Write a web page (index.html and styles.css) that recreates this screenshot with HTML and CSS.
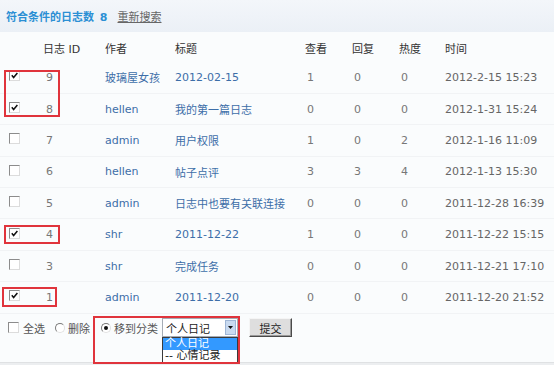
FILE: index.html
```html
<!DOCTYPE html>
<html lang="zh-CN">
<head>
<meta charset="utf-8">
<title>日志列表</title>
<link rel="stylesheet" href="styles.css">
</head>
<body>
<div class="page">
  <div class="topbar">
    <span class="count">符合条件的日志数 <b>8</b></span>
    <a class="research" href="#">重新搜索</a>
  </div>

  <table class="logs">
    <colgroup>
      <col class="c-cb"><col class="c-id"><col class="c-au"><col class="c-ti">
      <col class="c-n"><col class="c-n"><col class="c-h"><col class="c-t">
    </colgroup>
    <thead>
      <tr><th></th><th class="hid">日志 ID</th><th>作者</th><th>标题</th><th class="hn">查看</th><th class="hn">回复</th><th class="hn">热度</th><th class="hn">时间</th></tr>
    </thead>
    <tbody>
      <tr><td><span class="cb on"><svg viewBox="0 0 10 10"><path d="M2 4.8 L4 7.2 L8.2 2.2"/></svg></span></td><td class="id">9</td><td class="lnk">玻璃屋女孩</td><td class="lnk">2012-02-15</td><td class="num">1</td><td class="num">0</td><td class="num">0</td><td class="time">2012-2-15 15:23</td></tr>
      <tr><td><span class="cb on"><svg viewBox="0 0 10 10"><path d="M2 4.8 L4 7.2 L8.2 2.2"/></svg></span></td><td class="id">8</td><td class="lnk">hellen</td><td class="lnk">我的第一篇日志</td><td class="num">0</td><td class="num">0</td><td class="num">0</td><td class="time">2012-1-31 15:24</td></tr>
      <tr><td><span class="cb"></span></td><td class="id">7</td><td class="lnk">admin</td><td class="lnk">用户权限</td><td class="num">1</td><td class="num">0</td><td class="num">2</td><td class="time">2012-1-16 11:09</td></tr>
      <tr><td><span class="cb"></span></td><td class="id">6</td><td class="lnk">hellen</td><td class="lnk">帖子点评</td><td class="num">3</td><td class="num">3</td><td class="num">4</td><td class="time">2012-1-13 15:30</td></tr>
      <tr><td><span class="cb"></span></td><td class="id">5</td><td class="lnk">admin</td><td class="lnk">日志中也要有关联连接</td><td class="num">0</td><td class="num">0</td><td class="num">0</td><td class="time">2011-12-28 16:39</td></tr>
      <tr><td><span class="cb on"><svg viewBox="0 0 10 10"><path d="M2 4.8 L4 7.2 L8.2 2.2"/></svg></span></td><td class="id">4</td><td class="lnk">shr</td><td class="lnk">2011-12-22</td><td class="num">1</td><td class="num">0</td><td class="num">0</td><td class="time">2011-12-22 15:15</td></tr>
      <tr><td><span class="cb"></span></td><td class="id">3</td><td class="lnk">shr</td><td class="lnk">完成任务</td><td class="num">0</td><td class="num">0</td><td class="num">0</td><td class="time">2011-12-21 17:10</td></tr>
      <tr><td><span class="cb on"><svg viewBox="0 0 10 10"><path d="M2 4.8 L4 7.2 L8.2 2.2"/></svg></span></td><td class="id">1</td><td class="lnk">admin</td><td class="lnk">2011-12-20</td><td class="num">0</td><td class="num">0</td><td class="num">0</td><td class="time">2011-12-20 21:52</td></tr>
    </tbody>
  </table>

  <div class="actions">
    <label class="opt"><span class="cb"></span>全选</label>
    <label class="opt del"><span class="radio"></span>删除</label>
    <label class="opt move"><span class="radio on"></span>移到分类</label>
    <div class="select">
      <span class="sel-text">个人日记</span>
      <span class="sel-btn"><svg viewBox="0 0 7 4"><path d="M0 0 H7 L3.5 4 Z"/></svg></span>
      <div class="dropdown">
        <div class="item active">个人日记</div>
        <div class="item">-- 心情记录</div>
      </div>
    </div>
    <button class="submit" type="button">提交</button>
  </div>
  <div class="footline"></div>

  <div class="mark m1"></div>
  <div class="mark m2"></div>
  <div class="mark m3"></div>
  <div class="mark m4"></div>
</div>
</body>
</html>
```

FILE: styles.css
```css
* { box-sizing: border-box; }
html, body { margin: 0; padding: 0; }
body {
  background: #fafcfd;
  font-family: "DejaVu Sans", "Noto Sans CJK SC", sans-serif;
  font-size: 11px;
  color: #555;
}
.page {
  position: relative;
  width: 554px;
  height: 365px;
  overflow: hidden;
}
.topbar {
  height: 32px;
  display: flex;
  align-items: center;
  gap: 10px;
  padding-left: 6px;
  background: linear-gradient(#f3f6fa, #ebf0f6);
}
.count {
  color: #2b8fd4;
  font-weight: bold;
}
.count b { margin-left: 2px; }
.research {
  color: #666;
  text-decoration: underline;
}
.logs {
  width: 554px;
  border-collapse: collapse;
  table-layout: fixed;
}
.c-cb { width: 43px; }
.c-id { width: 62px; }
.c-au { width: 70px; }
.c-ti { width: 130px; }
.c-n { width: 47px; }
.c-h { width: 46px; }
.c-t { width: 109px; }
.logs th {
  height: 30px;
  padding: 2px 0 0;
  text-align: left;
  font-weight: normal;
  color: #333;
}
.logs th.hn { padding-left: 0; }
.logs td {
  height: 31.4px;
  padding: 0;
  white-space: nowrap;
  border-bottom: 1px solid #f1f3f5;
}
.logs td:first-child { padding-left: 9px; }
.logs td.id { padding-left: 3px; color: #777; }
.logs td.lnk { color: #3d6ea8; }
.logs td.num { padding-left: 2px; color: #777; }
.logs td.time { color: #666; }
.cb {
  display: inline-block;
  width: 11px;
  height: 11px;
  background: #fff;
  border: 1px solid;
  border-color: #8c8c8c #dcdcdc #dcdcdc #8c8c8c;
  vertical-align: middle;
  position: relative;
  top: -2px;
}
.cb svg {
  display: block;
  width: 9px;
  height: 9px;
}
.cb svg path {
  fill: none;
  stroke: #111;
  stroke-width: 1.7;
}
.actions {
  height: 28px;
  display: flex;
  align-items: center;
  padding-left: 8px;
}
.opt {
  display: flex;
  align-items: center;
  gap: 3px;
  color: #555;
}
.opt .cb { top: 0; margin-right: 1px; }
.del { margin-left: 10px; }
.move { margin-left: 11px; }
.radio {
  display: inline-block;
  width: 10px;
  height: 10px;
  border-radius: 50%;
  border: 1px solid;
  border-color: #7a7a7a #e2e2e2 #e2e2e2 #7a7a7a;
  background: #fff;
  position: relative;
}
.radio.on::after {
  content: "";
  position: absolute;
  left: 2px;
  top: 2px;
  width: 4px;
  height: 4px;
  border-radius: 50%;
  background: #111;
}
.select {
  position: relative;
  margin-left: 4px;
  width: 76px;
  height: 19px;
  border: 1px solid #a5acb5;
  background: #fff;
  display: flex;
  align-items: center;
  color: #222;
  font-size: 11px;
}
.sel-text { flex: 1; padding-left: 3px; }
.sel-btn {
  width: 11px;
  height: 15px;
  margin-right: 1px;
  background: #c9daf0;
  border: 1px solid #9fb6d6;
  display: flex;
  align-items: center;
  justify-content: center;
}
.sel-btn svg { width: 5px; height: 3px; fill: #111; }
.dropdown {
  position: absolute;
  left: -1px;
  top: 18px;
  width: 76px;
  border: 1px solid #3b3b3b;
  background: #fff;
}
.item {
  height: 12px;
  line-height: 12px;
  padding-left: 2px;
  color: #222;
}
.item.active { background: #3399ff; color: #fff; }
.submit {
  margin-left: 11px;
  width: 43px;
  height: 19px;
  padding: 0;
  font: inherit;
  color: #222;
  background: #dedede;
  border: 1px solid;
  border-color: #f5f5f5 #4a4a4a #4a4a4a #f5f5f5;
  box-shadow: inset -1px -1px 0 #9a9a9a;
}
.footline {
  position: absolute;
  left: 0;
  right: 0;
  top: 362px;
  height: 3px;
  background: #eceef0;
  border-top: 1px solid #dfe1e3;
}
.mark {
  position: absolute;
  border: 2px solid #e0343c;
}
.m1 { left: 4px; top: 70px; width: 56px; height: 47px; }
.m2 { left: 4px; top: 225px; width: 56px; height: 19px; }
.m3 { left: 2px; top: 287px; width: 55px; height: 20px; }
.m4 { left: 93px; top: 316px; width: 147px; height: 48px; }
```
